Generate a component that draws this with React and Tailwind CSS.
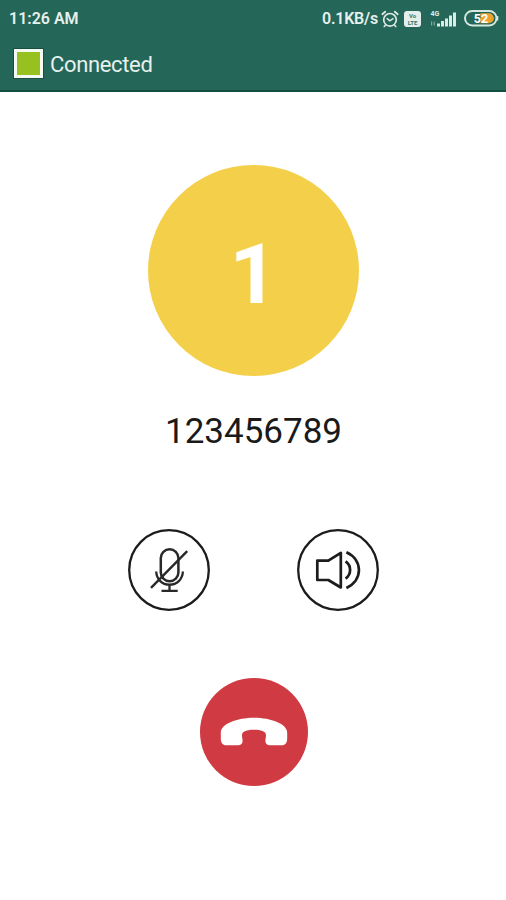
const AlarmIcon = () => (
  <svg width="18" height="18" viewBox="0 0 18 18" fill="none" stroke="#dcebe6" strokeLinecap="round">
    <circle cx="9" cy="9.8" r="6.3" strokeWidth="1.7" />
    <path d="M1.3 4.2 4.2 1.7M16.7 4.2 13.8 1.7" strokeWidth="1.8" />
    <path d="M6.2 8.6 8.8 10.8 12 8.6M4.4 15.2 3.2 16.6M13.6 15.2 14.8 16.6" strokeWidth="1.5" />
  </svg>
);

const VolteBadge = () => (
  <div className="flex h-[16px] w-[17px] flex-col items-center justify-center rounded-[3px] bg-[#e4efeb] text-[6px] leading-[7px] font-bold text-[#3d7568]">
    <span>Vo</span>
    <span>LTE</span>
  </div>
);

const SignalIcon = () => (
  <svg width="27" height="18" viewBox="0 0 27 18" fill="#dcebe6">
    <text x="0.5" y="5.7" fontSize="7" fontWeight="700">4G</text>
    <path d="M1 11.5h1.2v4H1zM3.6 11.5h1.2v4H3.6z" opacity="0.5" />
    <rect x="7" y="13.5" width="3" height="3" />
    <rect x="11" y="11" width="3" height="5.5" />
    <rect x="15" y="8.5" width="3" height="8" />
    <rect x="19" y="5.5" width="3" height="11" />
    <rect x="23" y="2.5" width="3" height="14" />
  </svg>
);

const BatteryIcon = () => (
  <svg width="35" height="17" viewBox="0 0 35 17">
    <rect x="1" y="1" width="31.5" height="14.5" rx="7.2" fill="none" stroke="#d5e8e0" strokeWidth="2" />
    <path d="M16.5 3.2h8.3a5 5 0 0 1 0 10.1h-8.3z" fill="#efa32e" />
    <path d="M33.6 6v4.5" stroke="#d5e8e0" strokeWidth="1.4" />
    <text x="17" y="12.8" textAnchor="middle" fontSize="12.5" fontWeight="700" fill="#fff">52</text>
  </svg>
);

const MicOffIcon = () => (
  <svg width="82" height="82" viewBox="0 0 82 82" fill="none" stroke="#292929">
    <circle cx="41" cy="41" r="39.8" strokeWidth="2.3" stroke="#1c1c1c" />
    <rect x="32.8" y="20.2" width="17.6" height="32" rx="8.8" strokeWidth="2.5" />
    <path d="M28.2 42.5c.4 8 6 13.2 13.3 13.2s13-5.2 13.4-13.2" strokeWidth="2.3" />
    <path d="M41.5 55.5v6.3M33.5 61.9h16.2" strokeWidth="2.3" />
    <path d="M23 58.8 59.2 22.2" strokeWidth="2.4" />
  </svg>
);

const SpeakerIcon = () => (
  <svg width="82" height="82" viewBox="0 0 82 82" fill="none" stroke="#1c1c1c">
    <circle cx="41" cy="41" r="39.8" strokeWidth="2.3" />
    <path
      d="M20.3 31.6h11L43.8 23.8v34.7L31.300 51H20.3z"
      strokeWidth="2.7"
      strokeLinejoin="round"
    />
    <path d="M48.6 32.4c6 4.4 6 12.6 0 17.200" strokeWidth="2.7" />
    <path d="M49.4 23.2c16.700 7.600 16.700 28 0 35.700" strokeWidth="2.7" />
  </svg>
);

const HangUpIcon = () => (
  <svg width="68" height="30" viewBox="0 0 68 30" fill="#fff">
    <path d="M.8 21.500v-6C.8 7 17 .8 34 .8S67.200 7 67.200 15.500v6c0 4-1.900 6.800-5.500 6.800H50c-3 0-4.600-1.700-4.600-4.200 0-2 .6-3.600.6-6 0-3.800-5.200-5.300-12-5.300s-12 1.500-12 5.300c0 2.400.6 4 .6 6 0 2.500-1.600 4.200-4.600 4.200H6.300c-3.600 0-5.500-2.800-5.500-6.800z" />
  </svg>
);

const StatusBar = () => (
  <div className="flex h-[37px] items-center justify-between pr-[7px] pl-[9px] text-[16px] font-semibold text-[#e6f0ed]">
    <span>11:26 AM</span>
    <div className="flex items-center">
      <span className="mr-[3px] tracking-[-0.2px]">0.1KB/s</span>
      <AlarmIcon />
      <div className="mr-[9px] ml-[5px]">
        <VolteBadge />
      </div>
      <SignalIcon />
      <div className="ml-[7px]">
        <BatteryIcon />
      </div>
    </div>
  </div>
);

const App = () => (
  <div className="flex h-[900px] w-[506px] flex-col overflow-hidden bg-white font-['Roboto',sans-serif]">
    <header className="h-[92px] border-b-2 border-[#124e40] bg-[#246657]">
      <StatusBar />
      <div className="flex h-[53px] items-center gap-[7px] pl-[14px]">
        <div className="h-[29px] w-[29px] border-[3px] border-[#f4faf2] bg-[#97c11f] ring-1 ring-[#17503f]" />
        <h1 className="pt-[3px] text-[22px] leading-none tracking-[-0.35px] text-[#e6f0ed]">Connected</h1>
      </div>
    </header>

    <main className="flex flex-col items-center pt-[73px] pl-px">
      {/* Caller */}
      <div className="flex h-[211px] w-[211px] items-center justify-center rounded-full bg-[#f4d04a]">
        <span className="pt-[8px] text-[84px] leading-none font-bold text-white">1</span>
      </div>
      <p className="mt-[35px] text-[35px] leading-[42px] text-[#1a1a1a]">123456789</p>

      {/* Call controls */}
      <div className="mt-[76px] flex gap-[87px]">
        <button aria-label="Mute">
          <MicOffIcon />
        </button>
        <button aria-label="Speaker">
          <SpeakerIcon />
        </button>
      </div>
      <button
        aria-label="End call"
        className="mt-[67px] flex h-[108px] w-[108px] items-center justify-center rounded-full bg-[#d03b43]"
      >
        <HangUpIcon />
      </button>
    </main>
  </div>
);

export default App;
